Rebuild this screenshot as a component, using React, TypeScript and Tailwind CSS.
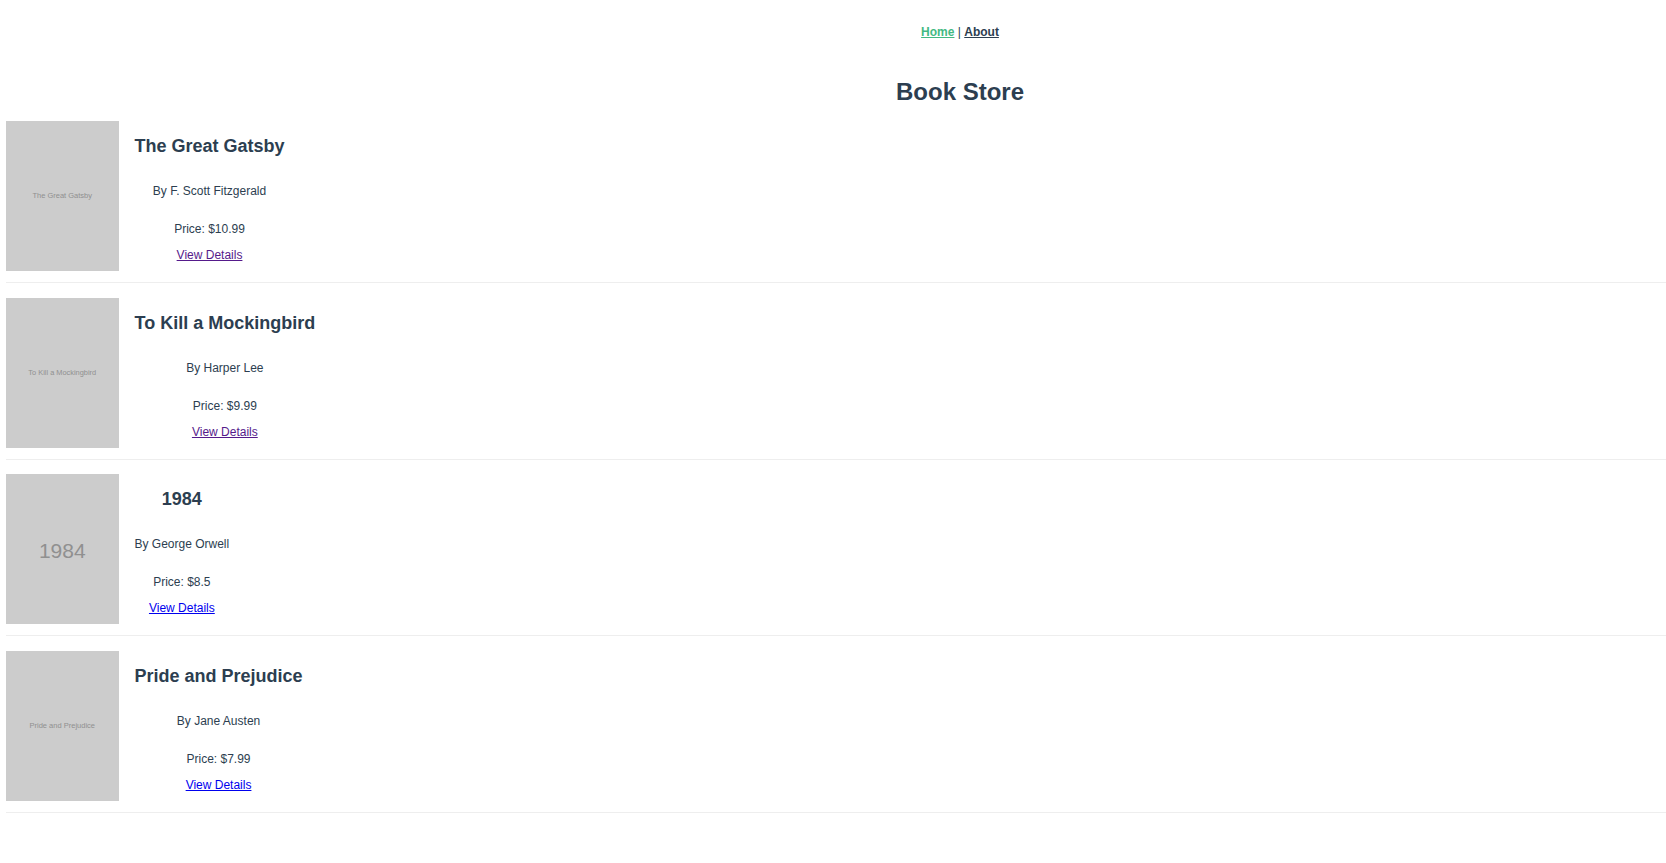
import React from "react";

type Book = {
  title: string;
  author: string;
  price: string;
  coverSize: string;
  visited: boolean;
};

const books: Book[] = [
  { title: "The Great Gatsby", author: "F. Scott Fitzgerald", price: "$10.99", coverSize: "text-[7.5px]", visited: true },
  { title: "To Kill a Mockingbird", author: "Harper Lee", price: "$9.99", coverSize: "text-[7.4px]", visited: true },
  { title: "1984", author: "George Orwell", price: "$8.5", coverSize: "text-[21px] pt-[3px]", visited: false },
  { title: "Pride and Prejudice", author: "Jane Austen", price: "$7.99", coverSize: "text-[7.5px]", visited: false },
];

function BookItem({ book }: { book: Book }) {
  return (
    <li className="flex flex-row pb-[11px] mb-[14.67px] border-b border-[#eeeeee]">
      <div
        className={`w-[112.5px] h-[150px] shrink-0 bg-[#cccccc] text-[#909090] flex items-center justify-center whitespace-nowrap ${book.coverSize}`}
      >
        {book.title}
      </div>
      <div className="ml-[16px] flex flex-col items-center text-center">
        <h2 className="text-[18px] font-bold leading-[21px] mt-[15px] mb-[15px]">{book.title}</h2>
        <p className="text-[12px] leading-[14px] mt-[12px] mb-[12px]">By {book.author}</p>
        <p className="text-[12px] leading-[14px] mt-[12px] mb-[12px]">Price: {book.price}</p>
        <a
          href="#"
          className={`text-[12px] leading-[14px] underline ${book.visited ? "text-[#551a8b]" : "text-[#0000ee]"}`}
        >
          View Details
        </a>
      </div>
    </li>
  );
}

export default function App() {
  return (
    <div
      className="w-full min-h-screen overflow-hidden bg-white text-[#2c3e50] antialiased"
      style={{ fontFamily: '"Liberation Sans", Arial, Helvetica, sans-serif' }}
    >
      <div className="w-[1920px]">
        <nav className="pt-[25px] text-center text-[12px] leading-[14px] font-bold">
          <a href="#" className="text-[#42b983] underline">Home</a>
          <span className="font-normal"> | </span>
          <a href="#" className="text-[#2c3e50] underline">About</a>
        </nav>
        <h1 className="mt-[39px] text-center text-[24px] leading-[28px] font-bold">Book Store</h1>
        <ul className="mt-[15px] px-[6px]">
          {books.map((b) => (
            <BookItem key={b.title} book={b} />
          ))}
        </ul>
      </div>
    </div>
  );
}
